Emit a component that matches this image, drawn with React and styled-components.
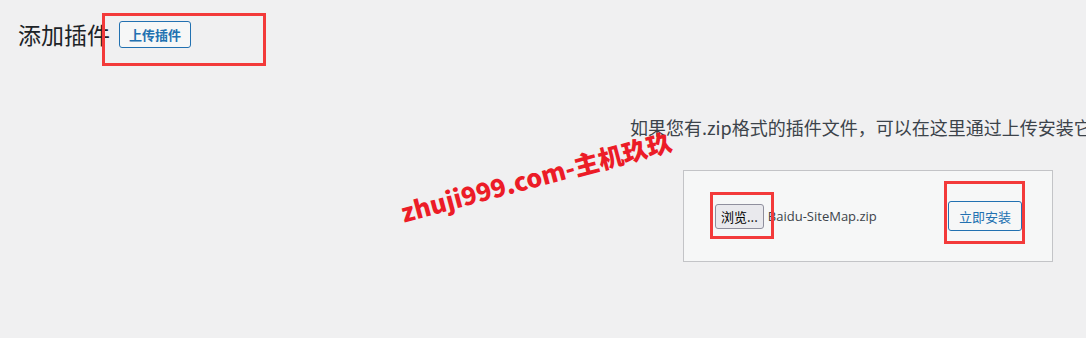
import React from "react";
import styled, { createGlobalStyle } from "styled-components";

const GlobalStyle = createGlobalStyle`
  html, body {
    margin: 0;
    padding: 0;
    background: #f0f0f1;
    overflow: hidden;
  }
  body {
    font-family: "Noto Sans", "Noto Sans CJK SC", sans-serif;
    color: #3c434a;
  }
`;

const Page = styled.div`
  position: relative;
  width: 1086px;
  height: 338px;
  overflow: hidden;
`;

const Header = styled.div`
  display: flex;
  align-items: center;
  gap: 9px;
  padding: 21px 0 0 18px;
  height: 27px;
`;

const Title = styled.h1`
  margin: 0;
  font-family: "Noto Sans CJK SC", sans-serif;
  font-size: 23px;
  font-weight: 400;
  color: #1d2327;
  line-height: 27px;
`;

const OutlineButton = styled.button`
  box-sizing: border-box;
  display: inline-flex;
  align-items: center;
  justify-content: center;
  padding: 0 ${(p) => (p.$small ? 9 : 10)}px;
  height: ${(p) => (p.$small ? 27 : 30)}px;
  border: 1px solid #2271b1;
  border-radius: 3px;
  background: #f6f7f7;
  color: #2271b1;
  font-family: "Noto Sans CJK SC", sans-serif;
  font-size: 13px;
  font-weight: ${(p) => (p.$bold ? 700 : 400)};
  cursor: pointer;
`;

const Help = styled.p`
  margin: 0;
  padding: 67px 0 0 630px;
  font-family: "Noto Sans CJK SC", sans-serif;
  font-size: 18px;
  line-height: 24px;
  color: #3c434a;
  white-space: nowrap;
`;

const UploadBox = styled.div`
  box-sizing: border-box;
  margin: 31px 0 0 683px;
  width: 370px;
  height: 92px;
  border: 1px solid #c3c4c7;
  background: #f6f7f7;
  display: flex;
  align-items: center;
  padding: 0 30px 0 31px;
`;

const FilePick = styled.div`
  display: flex;
  align-items: center;
  gap: 5px;
  flex: 1;
`;

const BrowseButton = styled.button`
  box-sizing: border-box;
  height: 25px;
  padding: 0 5px;
  border: 1px solid #8f8f9d;
  border-radius: 3px;
  background: #e9e9ed;
  color: #000;
  font-family: "Noto Sans CJK SC", sans-serif;
  font-size: 13px;
`;

const FileName = styled.span`
  font-family: "Open Sans", "Noto Sans", sans-serif;
  font-size: 13px;
  color: #3c434a;
  margin-left: -1px;
`;

const Mark = styled.div`
  position: absolute;
  border: 3px solid #f33a3a;
  box-sizing: border-box;
  pointer-events: none;
`;

const Watermark = styled.div`
  position: absolute;
  left: 401px;
  top: 194px;
  transform: rotate(-15deg);
  transform-origin: left center;
  font-family: "Noto Sans CJK SC", sans-serif;
  font-weight: 900;
  font-size: 25px;
  color: #ec1c27;
  white-space: nowrap;
  pointer-events: none;
`;

export default function App() {
  return (
    <>
      <GlobalStyle />
      <Page>
        <Header>
          <Title>添加插件</Title>
          <OutlineButton $small $bold>上传插件</OutlineButton>
        </Header>
        <Help>如果您有.zip格式的插件文件，可以在这里通过上传安装它。</Help>
        <UploadBox>
          <FilePick>
            <BrowseButton>浏览...</BrowseButton>
            <FileName>Baidu-SiteMap.zip</FileName>
          </FilePick>
          <OutlineButton>立即安装</OutlineButton>
        </UploadBox>

        <Mark style={{ left: 102, top: 13, width: 164, height: 53 }} />
        <Mark style={{ left: 710, top: 192, width: 64, height: 47 }} />
        <Mark style={{ left: 944, top: 181, width: 81, height: 63 }} />
        <Watermark>zhuji999.com-主机玖玖</Watermark>
      </Page>
    </>
  );
}
